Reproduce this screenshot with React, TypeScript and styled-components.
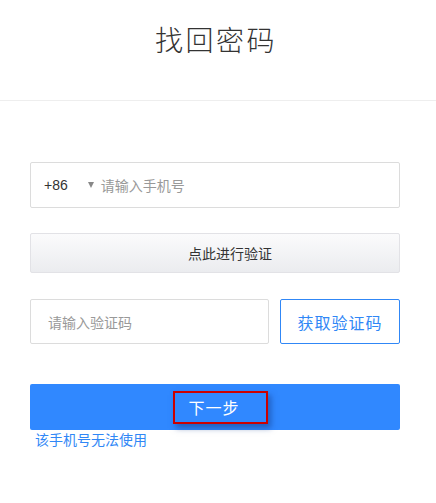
import React from "react";
import styled, { createGlobalStyle } from "styled-components";

const Global = createGlobalStyle`
  html, body { margin: 0; padding: 0; background: #fff; }
  body { font-family: "Noto Sans CJK SC", "Liberation Sans", sans-serif; }
  * { box-sizing: border-box; }
`;

const Header = styled.header`
  height: 101px;
  border-bottom: 1px solid #eeeeee;
  display: flex;
  align-items: center;
  justify-content: center;
`;

const Title = styled.h1`
  margin: 0;
  font-size: 28px;
  font-weight: 300;
  color: #333;
  letter-spacing: 2.5px;
  line-height: 1;
  margin-top: -22px;
  margin-left: -4px;
`;

const Form = styled.div`
  width: 370px;
  margin-left: 30px;
  padding-top: 61px;
  display: flex;
  flex-direction: column;
`;

const Field = styled.div<{ $grow?: boolean }>`
  height: ${(p) => (p.$grow ? "45px" : "46px")};
  border: 1px solid #dcdcdc;
  border-radius: 2px;
  display: flex;
  align-items: center;
  padding-left: 13px;
  font-size: 14px;
  flex: ${(p) => (p.$grow ? "1" : "none")};
`;

const Code = styled.span`
  color: #333;
  font-family: "Liberation Sans", sans-serif;
  font-size: 14px;
`;

const Caret = styled.span`
  width: 0;
  height: 0;
  border-left: 3.5px solid transparent;
  border-right: 3.5px solid transparent;
  border-top: 6px solid #888;
  margin-left: 20px;
  margin-right: 7px;
`;

const Placeholder = styled.span<{ $pad?: number }>`
  color: #999;
  font-size: 14px;
  padding-left: ${(p) => p.$pad ?? 0}px;
`;

const VerifyButton = styled.div`
  margin-top: 25px;
  height: 40px;
  border: 1px solid #e2e2e6;
  border-radius: 2px;
  background: linear-gradient(to bottom, #fbfbfc, #ebecef);
  display: flex;
  align-items: center;
  justify-content: center;
  padding-left: 30px;
  font-size: 14px;
  color: #333;
`;

const Row = styled.div`
  margin-top: 26px;
  display: flex;
  gap: 11px;
`;

const SendButton = styled.div`
  width: 120px;
  height: 45px;
  border: 1px solid #3087f6;
  border-radius: 2px;
  color: #3087f6;
  font-size: 16px;
  letter-spacing: 1px;
  display: flex;
  align-items: center;
  justify-content: center;
`;

const NextButton = styled.div`
  margin-top: 40px;
  height: 46px;
  background: #3088ff;
  border-radius: 2px;
  display: flex;
  align-items: center;
  justify-content: center;
`;

const Highlight = styled.span`
  width: 95px;
  height: 33px;
  margin-left: 10px;
  border: 2px solid #cc0000;
  box-shadow: 3px 4px 6px rgba(20, 60, 140, 0.55);
  color: #fff;
  font-size: 16px;
  display: flex;
  align-items: center;
  justify-content: center;
  padding-right: 12px;
  letter-spacing: 1px;
`;

const Link = styled.a`
  margin-top: 1px;
  margin-left: 5px;
  color: #3087f6;
  font-size: 14px;
  line-height: 16px;
  text-decoration: none;
`;

export default function App() {
  return (
    <>
      <Global />
      <Header>
        <Title>找回密码</Title>
      </Header>
      <Form>
        <Field>
          <Code>+86</Code>
          <Caret />
          <Placeholder>请输入手机号</Placeholder>
        </Field>
        <VerifyButton>点此进行验证</VerifyButton>
        <Row>
          <Field $grow>
            <Placeholder $pad={4}>请输入验证码</Placeholder>
          </Field>
          <SendButton>获取验证码</SendButton>
        </Row>
        <NextButton>
          <Highlight>下一步</Highlight>
        </NextButton>
        <Link href="#">该手机号无法使用</Link>
      </Form>
    </>
  );
}
